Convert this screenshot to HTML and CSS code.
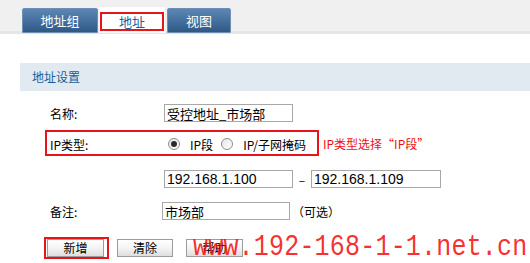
FILE: index.html
```html
<!DOCTYPE html>
<html lang="zh-CN">
<head>
    <meta charset="UTF-8">
    <title>地址设置</title>
    <link rel="stylesheet" href="styles.css">
</head>
<body>
    <div class="tabbar">
        <div class="tab">地址组</div>
        <div class="tab active"><span class="tab-mark">地址</span></div>
        <div class="tab">视图</div>
    </div>

    <div class="panel-title">地址设置</div>

    <div class="form">
        <div class="row first">
            <span class="label">名称:</span>
            <input class="text name-input" type="text" value="受控地址_市场部">
        </div>

        <div class="row-line">
            <div class="row marked">
                <span class="label">IP类型:</span>
                <span class="radio checked"></span>
                <span class="radio-text">IP段</span>
                <span class="radio second"></span>
                <span class="radio-text">IP/子网掩码</span>
            </div>
            <span class="note">IP类型选择“IP段”</span>
        </div>

        <div class="row ip-row">
            <span class="label"></span>
            <input class="text ip" type="text" value="192.168.1.100">
            <span class="dash">–</span>
            <input class="text ip ip-end" type="text" value="192.168.1.109">
        </div>

        <div class="row remark-row">
            <span class="label">备注:</span>
            <input class="text remark" type="text" value="市场部">
            <span class="optional">（可选）</span>
        </div>

        <div class="buttons">
            <span class="btn-mark"><button class="btn">新增</button></span>
            <button class="btn clear">清除</button>
            <button class="btn help">帮助</button>
        </div>
    </div>

    <div class="watermark">www.192-168-1-1.net.cn</div>
</body>
</html>
```

FILE: styles.css
```css
body {
    margin: 0;
    width: 530px;
    height: 263px;
    overflow: hidden;
    position: relative;
    background: #fff;
    color: #000;
    font-family: "Noto Sans CJK SC", "Liberation Sans", sans-serif;
    font-size: 12px;
}

/* top tabs */
.tabbar {
    height: 31px;
    padding-left: 22px;
    display: flex;
    align-items: flex-end;
    background: #f0f0f0;
    border-bottom: 3px solid #e6e6e6;
}

.tab {
    width: 76px;
    height: 25px;
    margin-bottom: -2px;
    box-sizing: border-box;
    border: 1px solid #6d8fb5;
    border-radius: 2px 2px 0 0;
    background: linear-gradient(#5d86b3 0%, #45709f 50%, #2f5884 100%);
    color: #fff;
    font-size: 13px;
    line-height: 23px;
    text-align: center;
}

.tab.active {
    width: 66px;
    height: 26px;
    margin-left: 1px;
    margin-right: 2px;
    padding: 5px 1px 2px 1px;
    border: none;
    background: #fff;
}

.tab:last-child {
    width: 64px;
}

.tab-mark {
    display: block;
    height: 19px;
    box-sizing: border-box;
    border: 2px solid #e8141b;
    color: #1b5f98;
    line-height: 15px;
}

.panel-title {
    margin: 29px 0 0 20px;
    height: 28px;
    padding-left: 12px;
    background: #e2eaf1;
    color: #175d96;
    line-height: 28px;
}

/* form rows */
.form {
    margin-left: 45px;
}

.row {
    display: flex;
    align-items: center;
    height: 18px;
    padding-left: 5px;
}

.row.first {
    margin-top: 13px;
}

.label {
    width: 114px;
    flex-shrink: 0;
}

.text {
    height: 18px;
    box-sizing: border-box;
    margin: 0;
    padding: 0 2px;
    border: 1px solid #a8a8a8;
    font-family: "Noto Sans CJK SC", sans-serif;
    font-size: 13px;
    color: #000;
    outline: none;
}

.name-input {
    width: 129px;
}

.row-line {
    display: flex;
    align-items: center;
    margin-top: 8px;
}

.row.marked {
    width: 274px;
    height: 26px;
    box-sizing: border-box;
    padding-left: 3px;
    padding-top: 2px;
    border: 2px solid #e8141b;
}

.radio {
    width: 12px;
    height: 12px;
    box-sizing: border-box;
    margin-left: 4px;
    border: 1px solid #8c8c8c;
    border-radius: 50%;
    background: linear-gradient(135deg, #e6e6e6, #ffffff);
    display: flex;
    align-items: center;
    justify-content: center;
}

.radio.checked::after {
    content: "";
    width: 6px;
    height: 6px;
    border-radius: 50%;
    background: #2b2b2b;
}

.radio.second {
    margin-left: 8px;
}

.radio-text {
    margin-left: 10px;
    font-size: 12px;
}

.note {
    margin-left: 4px;
    color: #f01010;
}

.ip-row {
    margin-top: 14px;
}

.ip {
    width: 129px;
    font-family: "Liberation Sans", sans-serif;
    font-size: 14px;
}

.ip-end {
    width: 130px;
}

.dash {
    width: 18px;
    text-align: center;
}

.remark-row {
    margin-top: 14px;
}

.remark {
    width: 128px;
    margin-left: -2px;
}

.optional {
    margin-left: 2px;
}

/* buttons */
.buttons {
    display: flex;
    align-items: center;
    margin-top: 17px;
    margin-left: -1px;
}

.btn-mark {
    width: 65px;
    height: 22px;
    box-sizing: border-box;
    padding: 0 1px;
    border: 2px solid #e8141b;
    display: flex;
    align-items: center;
}

.btn {
    width: 57px;
    height: 18px;
    margin: 0;
    padding: 0;
    border: 1px solid #9c9c9c;
    background: linear-gradient(#ffffff 0%, #f4f4f4 50%, #dedede 100%);
    font-family: "Noto Sans CJK SC", sans-serif;
    font-size: 12px;
    color: #000;
    line-height: 16px;
}

.btn.clear {
    width: 56px;
    margin-left: 8px;
}

.btn.help {
    margin-left: 13px;
}

/* site watermark lies over the buttons */
.watermark {
    position: absolute;
    left: 193px;
    top: 236px;
    font-family: "Liberation Mono", monospace;
    font-size: 25px;
    letter-spacing: 0.2px;
    line-height: 1;
    color: rgba(245, 20, 20, 0.9);
    white-space: nowrap;
    transform: scaleY(1.2);
    transform-origin: 0 19px;
}
```
